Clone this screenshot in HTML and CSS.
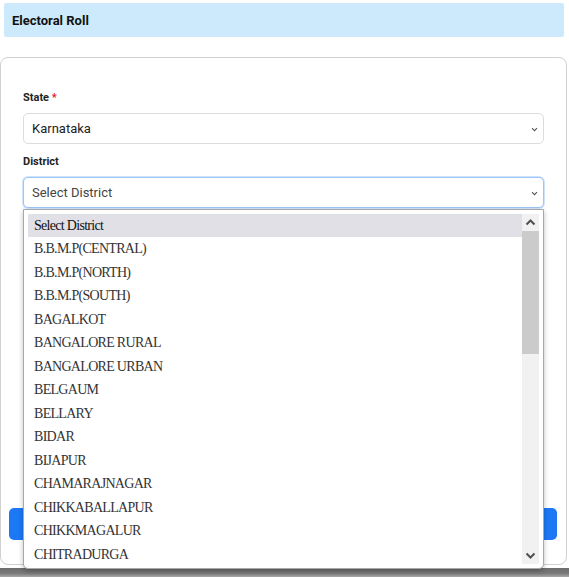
FILE: index.html
```html
<!DOCTYPE html>
<html lang="en">
<head>
<meta charset="utf-8">
<title>Electoral Roll</title>
<link rel="stylesheet" href="styles.css">
</head>
<body>
<div class="page">
  <div class="header">Electoral Roll</div>
  <div class="card">
    <div class="field">
      <div class="label">State <span class="req">*</span></div>
      <div class="select">
        <span>Karnataka</span>
        <svg class="chev" width="7" height="5" viewBox="0 0 7 5"><path d="M1 1.2l2.5 2.5 2.5-2.5" fill="none" stroke="#555" stroke-width="1.1"/></svg>
      </div>
    </div>
    <div class="field district">
      <div class="label">District</div>
      <div class="select focus">
        <span class="placeholder">Select District</span>
        <svg class="chev" width="7" height="5" viewBox="0 0 7 5"><path d="M1 1.2l2.5 2.5 2.5-2.5" fill="none" stroke="#555" stroke-width="1.1"/></svg>
      </div>
      <div class="dropdown">
        <ul class="options">
          <li class="active">Select District</li>
          <li>B.B.M.P(CENTRAL)</li>
          <li>B.B.M.P(NORTH)</li>
          <li>B.B.M.P(SOUTH)</li>
          <li>BAGALKOT</li>
          <li>BANGALORE RURAL</li>
          <li>BANGALORE URBAN</li>
          <li>BELGAUM</li>
          <li>BELLARY</li>
          <li>BIDAR</li>
          <li>BIJAPUR</li>
          <li>CHAMARAJNAGAR</li>
          <li>CHIKKABALLAPUR</li>
          <li>CHIKKMAGALUR</li>
          <li>CHITRADURGA</li>
        </ul>
        <div class="scrollbar">
          <div class="sb-btn"><svg width="11" height="7" viewBox="0 0 11 7"><path d="M1.5 5.5l4-4 4 4" fill="none" stroke="#505050" stroke-width="2"/></svg></div>
          <div class="sb-thumb"></div>
          <div class="sb-track"></div>
          <div class="sb-btn"><svg width="11" height="7" viewBox="0 0 11 7"><path d="M1.5 1.5l4 4 4-4" fill="none" stroke="#505050" stroke-width="2"/></svg></div>
        </div>
      </div>
    </div>
    <button class="btn">Search</button>
  </div>
  <div class="bottom-bar"></div>
</div>
</body>
</html>
```
FILE: styles.css
```css
* { box-sizing: border-box; }
html, body { margin: 0; padding: 0; background: #fff; }
body {
  font-family: Roboto, "Liberation Sans", Arial, sans-serif;
  color: #212529;
  width: 569px;
  height: 577px;
  overflow: hidden;
}
.page {
  display: flex;
  flex-direction: column;
  height: 577px;
}
.header {
  margin: 3px 5px 0 4px;
  height: 34px;
  background: #cceafc;
  font-size: 13px;
  font-weight: 700;
  color: #111;
  padding: 0 8px;
  display: flex;
  align-items: center;
  border-radius: 2px;
}
.card {
  position: relative;
  margin: 20px 2px 0 0;
  height: 508px;
  border: 1px solid #d0d0d0;
  border-radius: 8px;
  padding: 32px 23px 0 22px;
  display: flex;
  flex-direction: column;
}
.field { display: flex; flex-direction: column; }
.field + .field { margin-top: 10px; }
.label {
  font-size: 11px;
  font-weight: 700;
  color: #222;
  line-height: 16px;
  margin-bottom: 7px;
}
.req { color: #e0182d; }
.select {
  height: 31px;
  width: 521px;
  border: 1px solid #dcdcdc;
  border-radius: 5px;
  display: flex;
  align-items: center;
  justify-content: space-between;
  padding: 0 5px 0 8px;
  font-size: 13px;
  color: #222;
  background: #fff;
}
.select.focus {
  border-color: #9cc6f7;
  box-shadow: 0 0 0 1px #cfe3fb;
}
.placeholder { color: #444; }
.chev { margin-top: 1px; }
.district { position: relative; }
.dropdown {
  position: absolute;
  top: 100%;
  left: 0;
  width: 521px;
  height: 360px;
  margin-top: 1px;
  background: #fff;
  border: 1px solid #a8a8a8;
  border-radius: 0 0 5px 5px;
  box-shadow: 0 2px 5px rgba(0,0,0,0.25);
  padding: 4px;
  display: flex;
  z-index: 10;
}
.options {
  list-style: none;
  margin: 0;
  padding: 0;
  flex: 1;
}
.options li {
  height: 23.47px;
  line-height: 23.47px;
  padding-left: 6px;
  font-family: "Liberation Serif", "Times New Roman", serif;
  font-size: 14px;
  letter-spacing: -0.7px;
  color: #333;
  white-space: nowrap;
}
.options li.active {
  background: #e1e0e6;
  color: #111;
}
.scrollbar {
  width: 17px;
  display: flex;
  flex-direction: column;
  background: #f1f1f1;
}
.sb-btn {
  height: 17px;
  display: flex;
  align-items: center;
  justify-content: center;
}
.sb-thumb {
  height: 123px;
  background: #cbcbcb;
}
.sb-track { flex: 1; }
.btn {
  margin: auto -14px 24px -14px;
  height: 32px;
  border: none;
  border-radius: 5px;
  background: #1d78f5;
  color: #fff;
  font-family: Roboto, sans-serif;
  font-size: 13px;
}
.bottom-bar {
  margin-top: 3px;
  flex: 1;
  background: linear-gradient(#6c6c6c, #7a7a7a 60%, #a8a8a8);
}
```
